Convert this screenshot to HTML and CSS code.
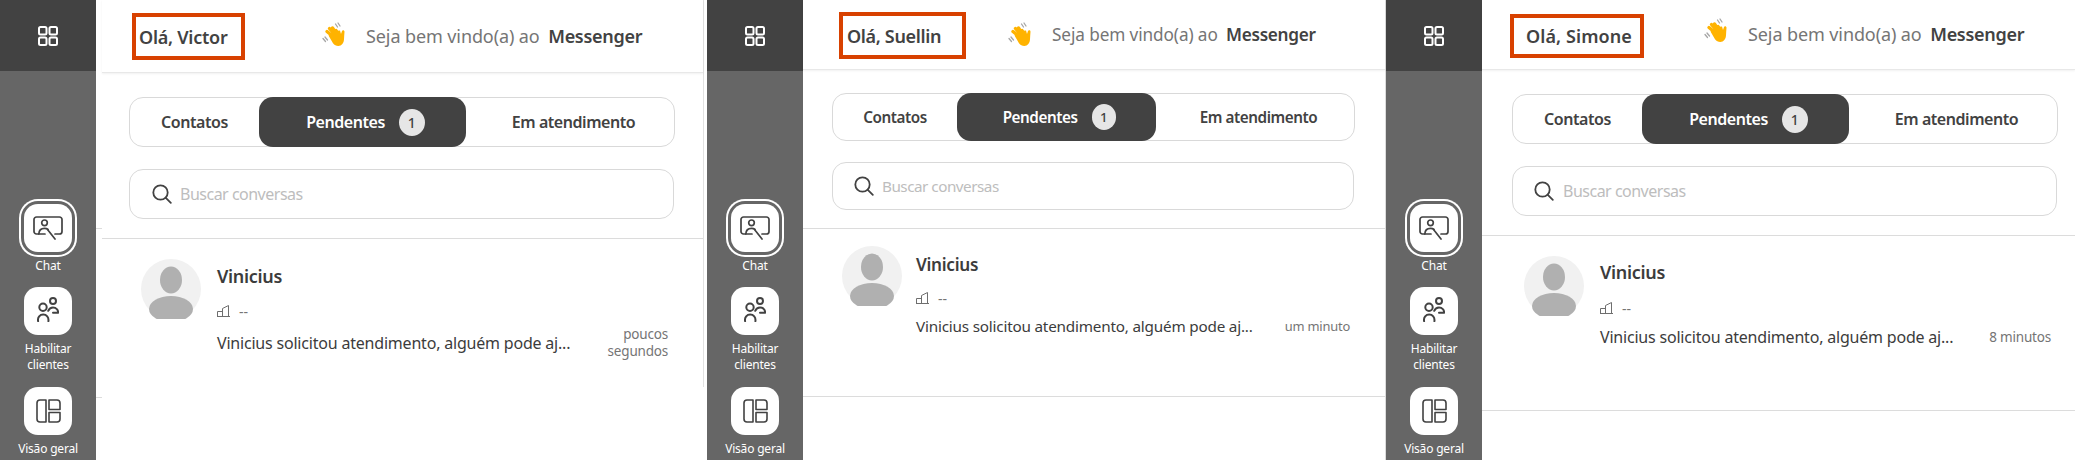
FILE: index.html
```html
<!DOCTYPE html>
<html lang="pt-BR">
<head>
<meta charset="utf-8">
<title>Messenger</title>
<link rel="stylesheet" href="styles.css">
</head>
<body>
<svg class="defs" width="0" height="0" aria-hidden="true">
  <defs>
    <symbol id="i-grid" viewBox="0 0 20 20"><g fill="none" stroke="currentColor" stroke-width="2"><rect x="1" y="1" width="7.5" height="7.5" rx="1.5"/><rect x="11.5" y="1" width="7.5" height="7.5" rx="1.5"/><rect x="1" y="11.5" width="7.5" height="7.5" rx="1.5"/><rect x="11.5" y="11.5" width="7.5" height="7.5" rx="1.5"/></g></symbol>
    <symbol id="i-chat" viewBox="0 0 30 24"><g fill="none" stroke="currentColor" stroke-width="1.7" stroke-linecap="round" stroke-linejoin="round"><path d="M22 18h4.500A2.500 2.500 0 0 0 29 15.500v-12A2.500 2.500 0 0 0 26.500 1h-23A2.500 2.500 0 0 0 1 3.500v12A2.500 2.500 0 0 0 3.500 18H12"/><circle cx="11.500" cy="6.800" r="2.800"/><path d="M5.800 18c.2-3.700 2.400-5.600 5.700-5.600 1.400 0 2.700.4 3.600 1"/><path d="m14.500 13.500 7.500 9.500"/></g></symbol>
    <symbol id="i-users" viewBox="0 0 22 25"><g fill="none" stroke="currentColor" stroke-width="2" stroke-linecap="round" stroke-linejoin="round"><circle cx="6" cy="10.200" r="3.700"/><circle cx="16" cy="4" r="3"/><path d="M1.100 24.200C.4 20.200 3 17.600 6.200 17.600s5.800 2.600 5.200 6.600"/><path d="M11.200 13.800c.9-2 2.700-3.200 4.800-3.200 3.200 0 5.400 2.200 5 5.200h-5"/></g></symbol>
    <symbol id="i-layout" viewBox="0 0 25 24"><g fill="none" stroke="currentColor" stroke-width="1.600" stroke-linejoin="round"><path d="M4 1h6v22H4a3 3 0 0 1-3-3V4a3 3 0 0 1 3-3Z"/><path d="M13 10.500V1h8a3 3 0 0 1 3 3v6.500Z"/><path d="M13 13.500h11V20a3 3 0 0 1-3 3h-8Z"/></g></symbol>
    <symbol id="i-build" viewBox="0 0 13 12"><g fill="none" stroke="#6e6e6e" stroke-width="1"><path d="M5.500 11.500V3.500l6-3v11Z"/><path d="M.5 11.500V6.500h5v5Z"/><path d="M0 11.500h13"/></g></symbol>
    <symbol id="i-search" viewBox="0 0 20 20"><g fill="none" stroke="#424242" stroke-width="1.8" stroke-linecap="round"><circle cx="8.500" cy="8.500" r="7.200"/><path d="m13.800 13.800 5 5"/></g></symbol>
    <symbol id="i-wave" viewBox="0 0 24 24">
      <g fill="none" stroke="#a6a6a6" stroke-width="1.300" stroke-linecap="round"><path d="M13.500 2 15.500 5"/><path d="M16 1 18 4"/><path d="M1 16.500 3.500 19.500"/><path d="M3 15 5.500 18"/></g>
      <g fill="none" stroke="#ffb300" stroke-width="3.400" stroke-linecap="round"><path d="M13 16 5 9.500"/><path d="M14 14 7.500 6.500"/><path d="M15 13 10.500 6"/><path d="M17 14 14 8.500"/></g>
      <path fill="#ffb300" d="M6.500 13.500 12 9l6-.5 1 3.500 1-3c.6-1.300 2.600-.8 2.500.8-.2 2.800-.4 5.200-.5 7.500-.2 3.800-2.300 6.700-5.700 6.700-2.300 0-3.800-1-5.300-2.800Z"/>
    </symbol>
  </defs>
</svg>

<main class="screens">

  <section class="panel p1">
    <aside class="side">
      <div class="side-top"><svg class="ic-grid"><use href="#i-grid"/></svg></div>
      <nav class="nav">
        <div class="nav-item"><span class="nav-btn active"><svg class="ic-chat"><use href="#i-chat"/></svg></span><span class="nav-label">Chat</span></div>
        <div class="nav-item tall"><span class="nav-btn"><svg class="ic-users"><use href="#i-users"/></svg></span><span class="nav-label">Habilitar<br>clientes</span></div>
        <div class="nav-item"><span class="nav-btn"><svg class="ic-layout"><use href="#i-layout"/></svg></span><span class="nav-label">Visão geral</span></div>
      </nav>
    </aside>
    <div class="gutter"></div>
    <div class="content">
      <header class="head">
        <div class="hello">Olá, Victor</div>
        <svg class="wave"><use href="#i-wave"/></svg>
        <p class="welcome">Seja bem vindo(a) ao <b>Messenger</b></p>
      </header>
      <div class="tabs">
        <button class="tab t-contacts">Contatos</button>
        <button class="tab on">Pendentes <span class="count">1</span></button>
        <button class="tab t-service">Em atendimento</button>
      </div>
      <div class="search"><svg class="ic-search"><use href="#i-search"/></svg><span class="ph">Buscar conversas</span></div>
      <article class="conv">
        <svg class="avatar" viewBox="0 0 60 60"><circle cx="30" cy="30" r="30" fill="#f1f1f1"/><ellipse cx="30" cy="21" rx="11" ry="13.500" fill="#b0b0b0"/><ellipse cx="30" cy="50" rx="22" ry="13" fill="#b0b0b0"/></svg>
        <div class="conv-body">
          <h3 class="name">Vinicius</h3>
          <div class="meta"><svg class="ic-build"><use href="#i-build"/></svg><span>--</span></div>
          <div class="last"><span class="msg">Vinicius solicitou atendimento, alguém pode aj...</span><span class="when w-two">poucos segundos</span></div>
        </div>
      </article>
    </div>
  </section>

  <section class="panel p2">
    <aside class="side">
      <div class="side-top"><svg class="ic-grid"><use href="#i-grid"/></svg></div>
      <nav class="nav">
        <div class="nav-item"><span class="nav-btn active"><svg class="ic-chat"><use href="#i-chat"/></svg></span><span class="nav-label">Chat</span></div>
        <div class="nav-item tall"><span class="nav-btn"><svg class="ic-users"><use href="#i-users"/></svg></span><span class="nav-label">Habilitar<br>clientes</span></div>
        <div class="nav-item"><span class="nav-btn"><svg class="ic-layout"><use href="#i-layout"/></svg></span><span class="nav-label">Visão geral</span></div>
      </nav>
    </aside>
    <div class="content">
      <header class="head">
        <div class="hello">Olá, Suellin</div>
        <svg class="wave"><use href="#i-wave"/></svg>
        <p class="welcome">Seja bem vindo(a) ao <b>Messenger</b></p>
      </header>
      <div class="tabs">
        <button class="tab t-contacts">Contatos</button>
        <button class="tab on">Pendentes <span class="count">1</span></button>
        <button class="tab t-service">Em atendimento</button>
      </div>
      <div class="search"><svg class="ic-search"><use href="#i-search"/></svg><span class="ph">Buscar conversas</span></div>
      <article class="conv">
        <svg class="avatar" viewBox="0 0 60 60"><circle cx="30" cy="30" r="30" fill="#f1f1f1"/><ellipse cx="30" cy="21" rx="11" ry="13.500" fill="#b0b0b0"/><ellipse cx="30" cy="50" rx="22" ry="13" fill="#b0b0b0"/></svg>
        <div class="conv-body">
          <h3 class="name">Vinicius</h3>
          <div class="meta"><svg class="ic-build"><use href="#i-build"/></svg><span>--</span></div>
          <div class="last"><span class="msg">Vinicius solicitou atendimento, alguém pode aj...</span><span class="when">um minuto</span></div>
        </div>
      </article>
    </div>
  </section>

  <section class="panel p3">
    <aside class="side">
      <div class="side-top"><svg class="ic-grid"><use href="#i-grid"/></svg></div>
      <nav class="nav">
        <div class="nav-item"><span class="nav-btn active"><svg class="ic-chat"><use href="#i-chat"/></svg></span><span class="nav-label">Chat</span></div>
        <div class="nav-item tall"><span class="nav-btn"><svg class="ic-users"><use href="#i-users"/></svg></span><span class="nav-label">Habilitar<br>clientes</span></div>
        <div class="nav-item"><span class="nav-btn"><svg class="ic-layout"><use href="#i-layout"/></svg></span><span class="nav-label">Visão geral</span></div>
      </nav>
    </aside>
    <div class="content">
      <header class="head">
        <div class="hello">Olá, Simone</div>
        <svg class="wave"><use href="#i-wave"/></svg>
        <p class="welcome">Seja bem vindo(a) ao <b>Messenger</b></p>
      </header>
      <div class="tabs">
        <button class="tab t-contacts">Contatos</button>
        <button class="tab on">Pendentes <span class="count">1</span></button>
        <button class="tab t-service">Em atendimento</button>
      </div>
      <div class="search"><svg class="ic-search"><use href="#i-search"/></svg><span class="ph">Buscar conversas</span></div>
      <article class="conv">
        <svg class="avatar" viewBox="0 0 60 60"><circle cx="30" cy="30" r="30" fill="#f1f1f1"/><ellipse cx="30" cy="21" rx="11" ry="13.500" fill="#b0b0b0"/><ellipse cx="30" cy="50" rx="22" ry="13" fill="#b0b0b0"/></svg>
        <div class="conv-body">
          <h3 class="name">Vinicius</h3>
          <div class="meta"><svg class="ic-build"><use href="#i-build"/></svg><span>--</span></div>
          <div class="last"><span class="msg">Vinicius solicitou atendimento, alguém pode aj...</span><span class="when">8 minutos</span></div>
        </div>
      </article>
    </div>
  </section>

</main>
</body>
</html>
```
FILE: styles.css
```css
* { box-sizing: border-box; }
html, body { margin: 0; padding: 0; height: 460px; overflow: hidden; background: #fff; }
body { font-family: "Noto Sans", "Open Sans", sans-serif; color: #424242; }
.defs { position: absolute; }

.screens { display: flex; width: 2075px; height: 460px; }
.panel { display: flex; height: 460px; flex: none; }

/* Per-screenshot metrics */
.p1 {
  width: 707px; --head: 73px; --hello-l: 30px; --hello-w: 113px; --hello-h: 47px; --hello-top: 13px;
  --hello-pad: 3px; --hello-ls: -.25px; --wave-gap: 77px; --bar-l: 27px; --bar-w: 546px; --bar-t: 24px; --bar-h: 50px;
  --pill-l: 129px; --pill-w: 207px; --search-t: 22px; --rule-t: 19px; --av-l: 39px; --av-t: 20px;
  --body-gap: 16px; --conv-h: 222px; --conv-line: transparent; --fs: 1;
  --search-w: 545px; --ph-l: 8px; --ic-l: 22px; --cont-w: 704px;
  --name-t: 5px; --meta-t: 15px; --last-t: 7px; --right: 35px;
}
.p2 {
  width: 679px; --head: 70px; --hello-l: 36px; --hello-w: 127px; --hello-h: 47px; --hello-top: 12px;
  --hello-pad: 4px; --hello-ls: -.33px; --wave-gap: 42px; --bar-l: 29px; --bar-w: 523px; --bar-t: 23px; --bar-h: 48px;
  --pill-l: 124px; --pill-w: 199px; --search-t: 21px; --rule-t: 18px; --av-l: 39px; --av-t: 17px;
  --body-gap: 14px; --conv-h: 169px; --conv-line: #dcdcdc; --fs: .955;
  --search-w: 522px; --ph-l: 8px; --ic-l: 21px; --cont-w: 583px;
  --name-t: 7px; --meta-t: 13px; --last-t: 9px; --right: 35px;
}
.p3 {
  width: 689px; --head: 70px; --hello-l: 28px; --hello-w: 134px; --hello-h: 44px; --hello-top: 14px;
  --hello-pad: 12px; --hello-ls: .1px; --wave-gap: 60px; --bar-l: 30px; --bar-w: 546px; --bar-t: 24px; --bar-h: 50px;
  --pill-l: 129px; --pill-w: 207px; --search-t: 22px; --rule-t: 19px; --av-l: 42px; --av-t: 20px;
  --body-gap: 16px; --conv-h: 176px; --conv-line: #dcdcdc; --fs: 1;
  --search-w: 545px; --ph-l: 9px; --ic-l: 21px; --cont-w: 593px;
  --name-t: 4px; --meta-t: 16px; --last-t: 10px; --right: 24px;
}

/* Sidebar */
.side { width: 96px; flex: none; background: #666; display: flex; flex-direction: column; }
.side-top { height: 71px; background: #424242; display: flex; align-items: center; justify-content: center; }
.ic-grid { width: 20px; height: 20px; color: #fff; }
.nav { padding-top: 133px; display: flex; flex-direction: column; gap: 13px; align-items: center; }
.nav-item { display: flex; flex-direction: column; align-items: center; gap: 6px; width: 96px; }
.nav-item.tall { margin-bottom: 1px; }
.nav-btn { width: 48px; height: 48px; border-radius: 14px; background: #fff; color: #424242; display: flex; align-items: center; justify-content: center; }
.nav-btn.active { box-shadow: 0 0 0 3px #666, 0 0 0 5px #fff; }
.ic-chat { width: 30px; height: 24px; }
.ic-users { width: 22px; height: 25px; margin-bottom: 3px; }
.ic-layout { width: 25px; height: 24px; }
.nav-label { color: #fff; font-size: 12px; line-height: 16px; text-align: center; letter-spacing: -.2px; }

/* Left gutter of the first screenshot */
.gutter {
  width: 6px; flex: none;
  background:
    linear-gradient(#dcdcdc, #dcdcdc) 0 228px / 100% 1px no-repeat,
    linear-gradient(#dcdcdc, #dcdcdc) 0 397px / 100% 1px no-repeat;
}

/* Main column */
.content { width: var(--cont-w); flex: none; display: flex; flex-direction: column; background: #fff; }
.p1 .content { width: 602px; border-right: 1px solid #e2e2e2; height: 387px; }
.p2 .content { border-right: 1px solid #dcdcdc; }
.head {
  height: var(--head); flex: none; display: flex; align-items: flex-start;
  padding-left: var(--hello-l); border-bottom: 1px solid #e8e8e8; box-shadow: 0 1px 2px rgba(0,0,0,.06);
}
.hello {
  width: var(--hello-w); height: var(--hello-h); margin-top: var(--hello-top); border: 4px solid #d84100;
  padding-left: var(--hello-pad); display: flex; align-items: center; flex: none;
  font-size: 18px; font-weight: 600; letter-spacing: var(--hello-ls); white-space: nowrap;
}
.wave { width: 24px; height: 24px; margin-left: var(--wave-gap); margin-top: 22px; flex: none; }
.p3 .wave { margin-top: 18px; }
.welcome {
  margin: 0 0 0 20px; height: 70px; line-height: 72px; font-size: calc(18px * var(--fs)); color: #757575;
  letter-spacing: -.1px; white-space: nowrap;
}
.p2 .welcome { line-height: 70px; }
.p3 .welcome { line-height: 68px; }
.welcome b { color: #424242; font-weight: 600; margin-left: 4px; letter-spacing: -.3px; }

/* Tabs */
.tabs {
  margin: var(--bar-t) 0 0 var(--bar-l); width: var(--bar-w); height: var(--bar-h); flex: none;
  border: 1px solid #d9d9d9; border-radius: 14px; display: grid;
  grid-template-columns: var(--pill-l) var(--pill-w) 1fr;
}
.tab {
  border: 0; background: transparent; font: inherit; font-size: calc(16px * var(--fs)); font-weight: 600;
  color: #424242; letter-spacing: -.45px; padding: 0; display: flex; align-items: center; justify-content: center;
}
.tab.on { background: #424242; color: #fff; border-radius: 14px; margin: -1px 0; gap: 14px; padding-left: 6px; }
.t-service { padding-left: 7px; }
.count {
  width: calc(26px * var(--fs)); height: calc(27px * var(--fs)); border-radius: 50%; background: #e6e6e6; color: #424242;
  font-size: calc(14px * var(--fs)); font-weight: 500; display: flex; align-items: center; justify-content: center; letter-spacing: 0;
}

/* Search */
.search {
  margin: var(--search-t) 0 0 var(--bar-l); width: var(--search-w); height: var(--bar-h); flex: none;
  border: 1px solid #d9d9d9; border-radius: 14px; display: flex; align-items: center; padding-left: var(--ic-l);
}
.ic-search { width: 20px; height: 20px; flex: none; }
.ph { margin-left: var(--ph-l); font-size: calc(16px * var(--fs)); color: #bdbdbd; letter-spacing: -.5px; }

/* Conversation */
.conv {
  margin-top: var(--rule-t); height: var(--conv-h); flex: none; display: flex; align-items: flex-start;
  padding: var(--av-t) 0 0 var(--av-l); gap: var(--body-gap);
  border-top: 1px solid #dcdcdc; border-bottom: 1px solid var(--conv-line);
}
.p1 .conv { height: 148px; }
.avatar { width: 60px; height: 60px; flex: none; }
.conv-body { flex: 1; min-width: 0; padding-right: var(--right); }
.name { margin: var(--name-t) 0 0; font-size: calc(18px * var(--fs)); line-height: 24px; font-weight: 600; color: #3c3c3c; letter-spacing: -.3px; }
.meta { margin-top: var(--meta-t); display: flex; align-items: center; gap: 9px; height: 16px; font-size: 14px; color: #757575; }
.ic-build { width: 13px; height: 12px; flex: none; }
.last { margin-top: var(--last-t); display: flex; align-items: center; justify-content: space-between; }
.msg { font-size: calc(16px * var(--fs)); line-height: 22px; color: #3c3c3c; letter-spacing: -.2px; white-space: nowrap; }
.when { font-size: calc(13.500px * var(--fs)); line-height: 17px; color: #757575; text-align: right; letter-spacing: -.2px; white-space: nowrap; }
.when.w-two { white-space: normal; width: 62px; }
```
